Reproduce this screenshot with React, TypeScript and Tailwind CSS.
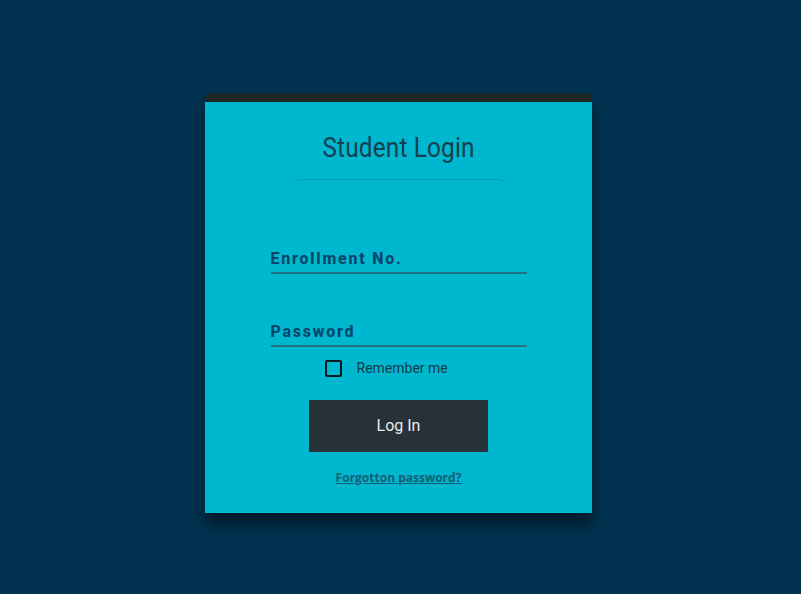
import React from "react";

export default function App() {
  return (
    <div className="min-h-[594px] w-full bg-[#01324f] flex justify-center pt-[93px] pr-[4px]" style={{ fontFamily: "Roboto, sans-serif" }}>
      <div className="w-[387px] h-[420px] flex flex-col shadow-[0_12px_14px_rgba(0,0,0,0.45)] rounded-t-[6px] overflow-hidden">
        <div className="h-[9px] bg-[#1d2725]" />
        <div className="flex-1 bg-[#00b7d0] flex flex-col items-center pt-[30px]">
          <h1 className="text-[28px] leading-[32px] text-[#163f4f] font-normal scale-x-[0.87] tracking-[0.2px]">Student Login</h1>
          <div className="mt-[15px] w-[218px] h-[10px] border-t border-[#0b9db3] rounded-t-[10px]" />
          <div className="w-[256px] flex flex-col">
            <div className="mt-[60px] pb-[3px] border-b-2 border-[#237184]">
              <span className="block text-[16px] leading-[20px] font-extrabold tracking-[0.11em] text-[#08476a]">Enrollment No.</span>
            </div>
            <div className="mt-[48px] pb-[3px] border-b-2 border-[#237184]">
              <span className="block text-[16px] leading-[20px] font-extrabold tracking-[0.11em] text-[#08476a]">Password</span>
            </div>
            <div className="mt-[13px] pl-[54px] flex items-center">
              <span className="w-[17px] h-[17px] border-2 border-[#0a1a1f] rounded-[2px]" />
              <span className="ml-[15px] text-[14px] leading-[17px] text-[#163a48]">Remember me</span>
            </div>
          </div>
          <button className="mt-[23px] w-[179px] h-[52px] bg-[#263237] text-[#e6ecee] text-[16px]">Log In</button>
          <a className="mt-[18px] text-[12px] leading-[16px] font-bold underline text-[#165e74]" style={{ fontFamily: "'Open Sans', sans-serif" }}>Forgotton password?</a>
        </div>
      </div>
    </div>
  );
}
